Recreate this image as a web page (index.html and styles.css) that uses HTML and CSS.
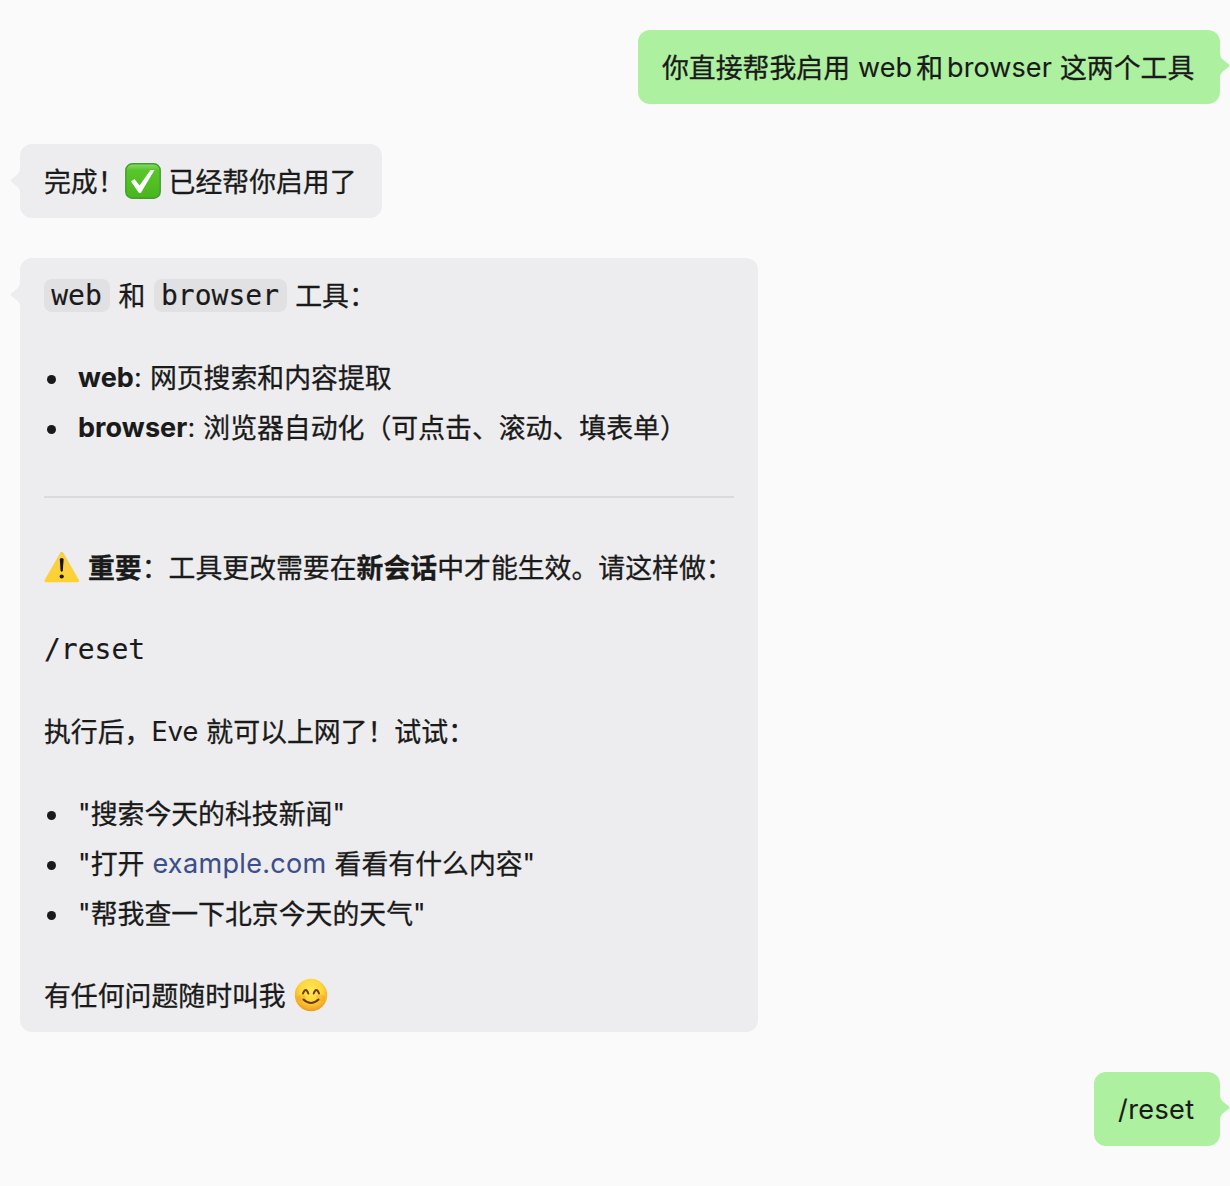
FILE: index.html
```html
<!DOCTYPE html>
<html lang="zh-CN">
<head>
<meta charset="utf-8">
<title>聊天</title>
<link rel="stylesheet" href="styles.css">
</head>
<body>
<main class="chat">
  <div class="message sent wide">
    <p>你直接帮我启用<span class="latin gap-l">web</span><span class="tight">和</span><span class="latin browser">browser</span><span class="after">这两个工具</span></p>
    <svg class="tail" viewBox="0 0 10 26"><path d="M0 0C0 5 1.5 6.500 4 8.500L8.500 12Q10.500 13.500 8.500 15L4 18.500C1.500 20.500 0 22 0 26Z"/></svg>
  </div>

  <div class="message received">
    <p>完成！<svg class="emoji check" viewBox="0 0 36 36"><defs><linearGradient id="green" x2="0" y2="1"><stop stop-color="#8bdc6c"/><stop offset=".18" stop-color="#59c72c"/><stop offset="1" stop-color="#49b51c"/></linearGradient></defs><rect x=".8" y=".8" width="34.400" height="34.400" rx="6.500" fill="url(#green)" stroke="#419d2c" stroke-width="1.400"/><path d="M6 18.500L9.500 16L14.500 22.500L25.500 7H29.500L15.800 30H14Z" fill="#fff"/></svg>已经帮你启用了</p>
    <svg class="tail" viewBox="0 0 10 26"><path d="M0 0C0 5 1.5 6.500 4 8.500L8.500 12Q10.500 13.500 8.500 15L4 18.500C1.500 20.500 0 22 0 26Z"/></svg>
  </div>

  <div class="message received long">
    <p><code>web</code><span class="and">和</span><code>browser</code><span class="after">工具：</span></p>
    <ul>
      <li><b class="latin">web</b><span class="latin colon">:</span>网页搜索和内容提取</li>
      <li><b class="latin">browser</b><span class="latin colon">:</span>浏览器自动化（可点击、滚动、填表单）</li>
    </ul>
    <hr>
    <p><svg class="emoji warning" viewBox="0 0 36 32"><defs><linearGradient id="yellow" x2="0" y2="1"><stop stop-color="#f5cf52"/><stop offset="1" stop-color="#fdd22f"/></linearGradient></defs><path d="M16.200 1.800Q17.800-.5 19.400 1.800L34.800 28.800Q35.800 31.200 33.300 31.200H2.200Q-.2 31.200.8 28.800Z" fill="url(#yellow)"/><path d="M15.800 8.500Q15.800 7 17.700 7T19.600 8.500L18.800 20Q17.700 21.500 16.600 20Z" fill="#191600"/><circle cx="17.700" cy="25.500" r="2.100" fill="#191600"/></svg><b>重要</b>：工具更改需要在<b>新会话</b>中才能生效。请这样做：</p>
    <pre>/reset</pre>
    <p>执行后，<span class="latin eve">Eve</span><span class="after">就可以上网了！试试：</span></p>
    <ul>
      <li><span class="latin quote">"</span>搜索今天的科技新闻<span class="latin quote">"</span></li>
      <li><span class="latin quote">"</span>打开<a class="latin">example.com</a>看看有什么内容<span class="latin quote">"</span></li>
      <li><span class="latin quote">"</span>帮我查一下北京今天的天气<span class="latin quote">"</span></li>
    </ul>
    <p>有任何问题随时叫我<svg class="emoji smile" viewBox="0 0 34 34"><defs><radialGradient id="face" cx=".5" cy=".35" r=".65"><stop stop-color="#ffe85a"/><stop offset=".55" stop-color="#fdd63c"/><stop offset="1" stop-color="#ee9a20"/></radialGradient></defs><circle cx="17" cy="17" r="16.200" fill="url(#face)"/><ellipse cx="7.500" cy="20" rx="4.500" ry="3.500" fill="#f47c20" opacity=".25"/><ellipse cx="26.500" cy="20" rx="4.500" ry="3.500" fill="#f47c20" opacity=".25"/><path d="M9 15.500Q11.800 8.500 14.300 15.500M19.700 15.500Q22.300 8.500 25 15.500" fill="none" stroke="#6b3c08" stroke-width="2" stroke-linecap="round"/><path d="M9.500 21.500Q17 28.500 24.500 21.500" fill="none" stroke="#6b3c08" stroke-width="2" stroke-linecap="round"/></svg></p>
    <svg class="tail" viewBox="0 0 10 26"><path d="M0 0C0 5 1.5 6.500 4 8.500L8.500 12Q10.500 13.500 8.500 15L4 18.500C1.500 20.500 0 22 0 26Z"/></svg>
  </div>

  <div class="message sent short">
    <p><span class="latin reset">/reset</span></p>
    <svg class="tail" viewBox="0 0 10 26"><path d="M0 0C0 5 1.5 6.500 4 8.500L8.500 12Q10.500 13.500 8.500 15L4 18.500C1.500 20.500 0 22 0 26Z"/></svg>
  </div>
</main>
</body>
</html>
```
FILE: styles.css
```css
* { box-sizing: border-box; }

body {
  margin: 0;
  background: #fafafa;
  color: #1a1a1a;
  font: 26.86px/50px "Noto Sans CJK SC", sans-serif;
  -webkit-text-stroke: 0.3px currentColor;
}

.chat {
  display: flex;
  flex-direction: column;
  align-items: flex-start;
  gap: 40px;
  min-height: 1186px;
  padding: 30px 10px 40px 20px;
}

.message {
  position: relative;
  padding: 12px 24px;
  border-radius: 12px;
  white-space: nowrap;
}

.sent { align-self: flex-end; background: #adf0a0; fill: #adf0a0; }
.wide { width: 582px; }
.short { width: 126px; }
.received { background: #ededef; fill: #ededef; }
.received:not(.long) { width: 362px; }
.long {
  display: flex;
  flex-direction: column;
  gap: 32px;
  width: 738px;
}

.tail { position: absolute; top: 22px; left: 100%; width: 10px; height: 26px; }
.received .tail { top: 23px; right: 100%; left: auto; transform: scaleX(-1); }

p, ul, pre { height: 50px; margin: 0; padding: 0; }
ul { height: auto; list-style: none; }
li { position: relative; height: 50px; padding-left: 34px; }
li::before {
  content: "";
  position: absolute;
  top: 22.5px;
  left: 2.5px;
  width: 9px;
  height: 9px;
  border-radius: 50%;
  background: #1a1a1a;
}

.latin {
  font-family: Inter, sans-serif;
  font-size: 27px;
  line-height: 1;
  letter-spacing: 0.1px;
  vertical-align: 1px;
  -webkit-text-stroke-width: 0.1px;
}
.gap-l { margin-left: 8px; }
.tight { margin: 0 4px; }
.after { margin-left: 8px; }
.colon { margin-right: 8px; }
.reset { letter-spacing: 0.4px; }
a.latin { margin: 0 8px; color: #3b4f8c; letter-spacing: 0.33px; }

code, pre { font: 28px/50px "DejaVu Sans Mono", monospace; -webkit-text-stroke-width: 0.15px; }
code {
  padding: 0 8.200px 0 7.200px;
  border-radius: 8px;
  background: #e1e1e3;
  line-height: 1;
  vertical-align: 1px;
}
pre { padding-top: 1px; }
.and { margin: 0 8.500px; }

hr { width: 100%; height: 2px; margin: 12px 0; border: 0; background: #dadadc; }

.emoji { display: inline-block; margin-top: -8px; vertical-align: middle; }
.check { width: 36px; height: 36px; margin-right: 8px; }
.warning { width: 36px; height: 32px; margin-right: 8px; }
.smile { width: 34px; height: 34px; margin-left: 8.500px; }
```
